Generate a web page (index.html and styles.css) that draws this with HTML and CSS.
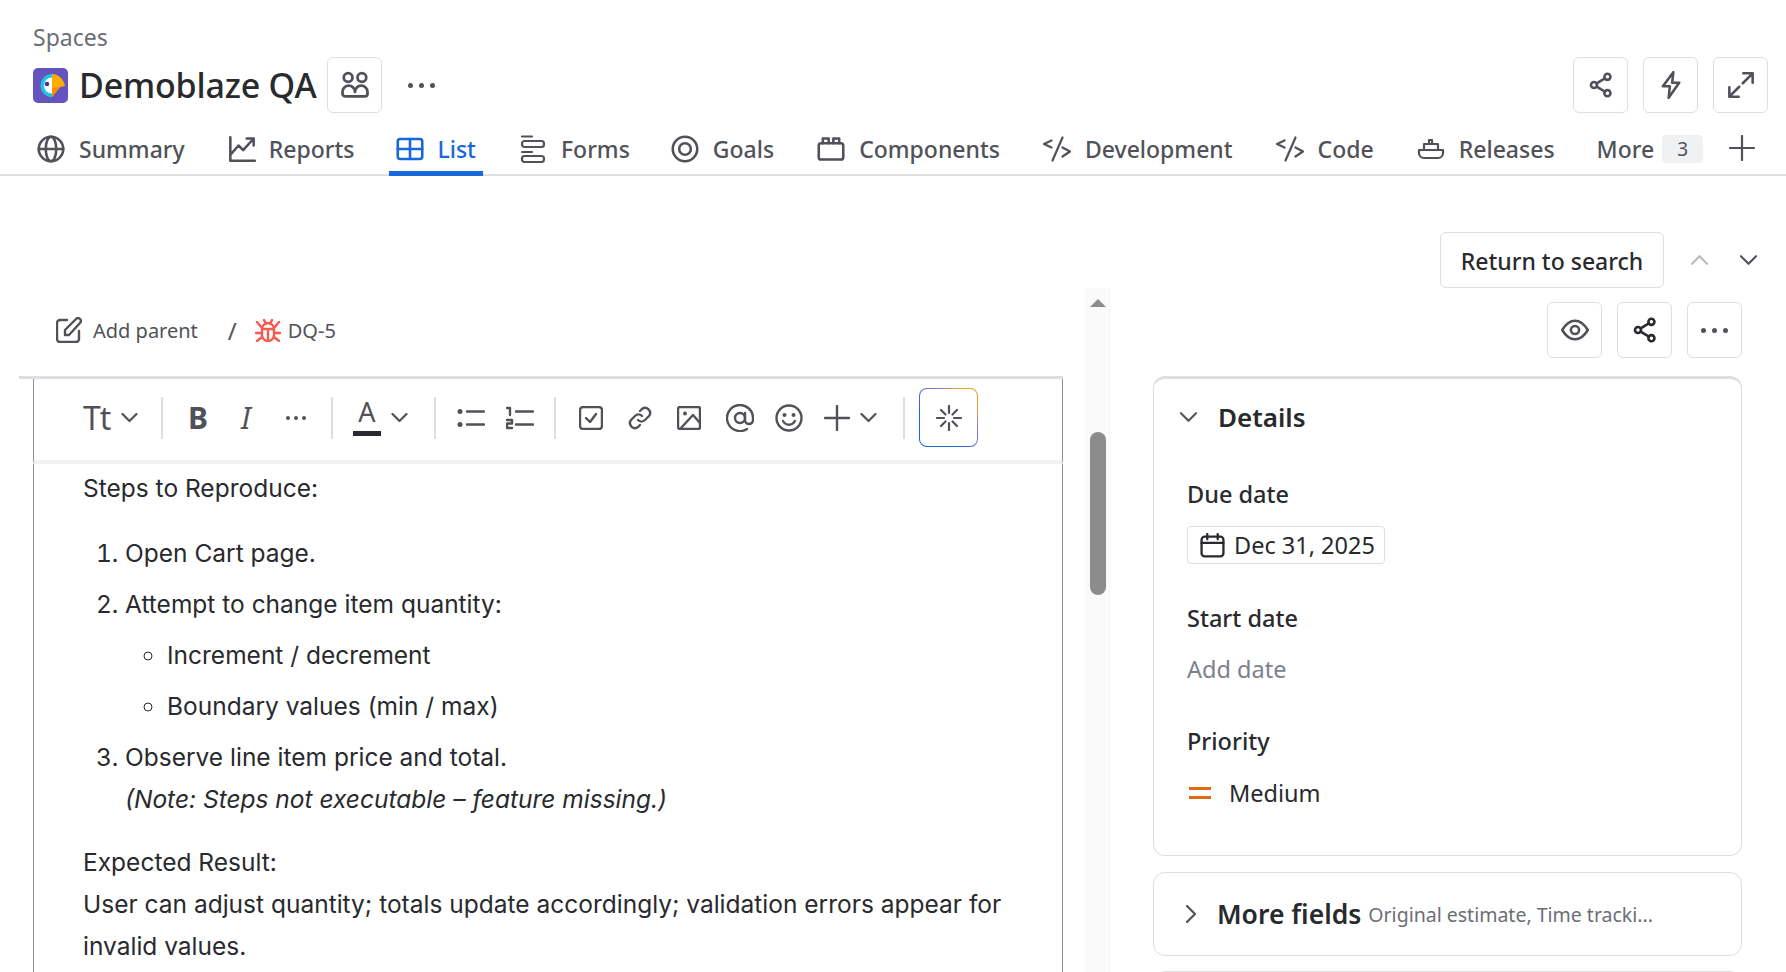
FILE: index.html
```html
<!DOCTYPE html>
<html lang="en">
<head>
    <meta charset="UTF-8">
    <title>Demoblaze QA</title>
    <link rel="stylesheet" href="styles.css">
</head>
<body>
    <div class="page">
        <header class="space-header">
            <div class="crumb">Spaces</div>
            <div class="title-row">
                <svg class="logo" viewBox="0 0 35 35">
                    <rect width="35" height="35" rx="5" fill="#6554c0"/>
                    <path d="M19 6a11.500 11.500 0 0 0 0 23z" fill="#1fc4e0"/>
                    <path d="M19 9.500a8 8 0 0 0 0 16z" fill="#fff"/>
                    <path d="M19 6c7 0 12 6 13 12l-5 1-8 10z" fill="#ffab00"/>
                    <path d="M19 29v-9l8-1z" fill="#ff8b00"/>
                    <circle cx="14" cy="16" r="2.200" fill="#403294"/>
                </svg>
                <h1 class="title">Demoblaze QA</h1>
                <button class="btn-icon team">
                    <svg viewBox="0 0 24 24"><circle cx="6.500" cy="6" r="3.500"/><circle cx="17.500" cy="6" r="3.500"/><path d="M2 19v-1.500a5 5 0 0 1 10 0 5 5 0 0 1 10 0V19a2 2 0 0 1-2 2H4a2 2 0 0 1-2-2z"/></svg>
                </button>
                <span class="dots"><i></i><i></i><i></i></span>
                <div class="header-actions">
                    <button class="btn-icon">
                        <svg viewBox="0 0 24 24"><circle cx="17.500" cy="5" r="2.600"/><circle cx="6" cy="12" r="2.600"/><circle cx="17.500" cy="19" r="2.600"/><path d="M8.300 10.600l7-4.200M8.300 13.400l7 4.200"/></svg>
                    </button>
                    <button class="btn-icon">
                        <svg viewBox="0 0 24 24"><path d="M14 1L5 13h6l-1 10 9-13h-6z"/></svg>
                    </button>
                    <button class="btn-icon">
                        <svg viewBox="0 0 24 24"><path d="M14 2h8v8M22 2l-8.500 8.500M10 22H2v-8M2 22l8.500-8.500"/></svg>
                    </button>
                </div>
            </div>
            <nav class="tabs">
                <a class="tab">
                    <svg viewBox="0 0 24 24"><circle cx="12" cy="12" r="10.500"/><ellipse cx="12" cy="12" rx="4.500" ry="10.500"/><path d="M1.500 12h21"/></svg>Summary</a>
                <a class="tab tab-reports">
                    <svg viewBox="0 0 24 24"><path d="M2 2v20h21M2 17L9 9l4 4 9-10M16 3h6v6"/></svg>Reports</a>
                <a class="tab active">
                    <svg viewBox="0 0 24 24"><rect x="1.500" y="3.500" width="21" height="17" rx="2"/><path d="M1.500 12h21M12 3.500v17"/></svg>List</a>
                <a class="tab tab-forms">
                    <svg viewBox="0 0 28 28"><path d="M3 1.500h10M3 17h10"/><rect x="3" y="6" width="22" height="6" rx="2.500"/><rect x="3" y="21" width="22" height="6" rx="2.500"/></svg>Forms</a>
                <a class="tab">
                    <svg viewBox="0 0 24 24"><circle cx="12" cy="12" r="10.500"/><circle cx="12" cy="12" r="5"/></svg>Goals</a>
                <a class="tab">
                    <svg viewBox="0 0 24 24"><rect x="1.500" y="7" width="21" height="14" rx="2"/><path d="M5 7V3h5v4M14 7V3h5v4"/></svg>Components</a>
                <a class="tab">
                    <svg viewBox="0 -2.500 27 28"><path d="M8 3L0.500 6.500 8 10M19 10l7.500 4L19 19M19 0L9 23"/></svg>Development</a>
                <a class="tab">
                    <svg viewBox="0 -2.500 27 28"><path d="M8 3L0.500 6.500 8 10M19 10l7.500 4L19 19M19 0L9 23"/></svg>Code</a>
                <a class="tab tab-releases">
                    <svg viewBox="0 0 28 28"><path d="M2 15h24v3a5 5 0 0 1-5 5H7a5 5 0 0 1-5-5zM7 15V9h14v6M12 9V5h3v4"/></svg>Releases</a>
                <a class="tab more">More<span class="count">3</span></a>
                <svg class="tab-plus" viewBox="0 0 26 26"><path d="M13 1v24M1 13h24"/></svg>
            </nav>
        </header>

        <div class="search-row">
            <button class="btn-return">Return to search</button>
            <svg class="chev chev-off" viewBox="0 0 18 10"><path d="M1 9l8-8 8 8"/></svg>
            <svg class="chev" viewBox="0 0 18 10"><path d="M1 1l8 8 8-8"/></svg>
        </div>

        <main class="issue">
            <section class="left-col">
                <div class="breadcrumbs">
                    <svg class="ic-parent" viewBox="0 0 26 26"><path d="M11 3H4a3 3 0 0 0-3 3v16a3 3 0 0 0 3 3h16a3 3 0 0 0 3-3v-8"/><path d="M9 18v-5L20 2a2.500 2.500 0 0 1 4 4L13 18z"/></svg>
                    <span>Add parent</span>
                    <span class="sep">/</span>
                    <svg class="ic-bug" viewBox="0 0 26 24"><path d="M7 11a6 6 0 0 1 12 0v6a6 6 0 0 1-12 0zM7 11h12M13 11v12M9 2l2 4M17 2l-2 4M2 4l5 6M24 4l-5 6M1 15h6M25 15h-6M2 23l5-4M24 23l-5-4"/></svg>
                    <span class="key">DQ-5</span>
                </div>
                <div class="editor">
                    <div class="toolbar">
                        <span class="tool-tt">Tt</span>
                        <svg class="mini" viewBox="0 0 16 10"><path d="M1 1l7 7 7-7"/></svg>
                        <i class="tool-sep sep-text"></i>
                        <span class="tool-b">B</span>
                        <span class="tool-i">I</span>
                        <span class="dots small"><i></i><i></i><i></i></span>
                        <i class="tool-sep sep-fmt"></i>
                        <span class="tool-a">A</span>
                        <svg class="mini" viewBox="0 0 16 10"><path d="M1 1l7 7 7-7"/></svg>
                        <i class="tool-sep sep-color"></i>
                        <svg class="tool" viewBox="0 0 28 24"><circle cx="3" cy="5.500" r="2.500" class="fill"/><circle cx="3" cy="18.500" r="2.500" class="fill"/><path d="M10 5.500h17M10 18.500h17"/></svg>
                        <svg class="tool tool-num" viewBox="0 0 28 24"><path d="M1 2h3v7M1 14h5v3.500H1V22h5M10 5.500h17M10 18.500h17"/></svg>
                        <i class="tool-sep sep-list"></i>
                        <svg class="tool tool-sq" viewBox="0 0 24 24"><rect x="1" y="1" width="22" height="22" rx="3"/><path d="M7 12l4 4 6-8"/></svg>
                        <svg class="tool tool-sq" viewBox="0 0 24 24"><path d="M10 14a5 5 0 0 0 7 0l4-4a5 5 0 0 0-7-7l-2 2M14 10a5 5 0 0 0-7 0l-4 4a5 5 0 0 0 7 7l2-2"/></svg>
                        <svg class="tool tool-sq" viewBox="0 0 24 24"><rect x="1" y="1" width="22" height="22" rx="2"/><circle cx="8" cy="7.500" r="2" class="fill"/><path d="M4 22l12-13 7 8"/></svg>
                        <svg class="tool tool-at" viewBox="0 0 28 28"><circle cx="14" cy="14" r="5"/><path d="M19 9v7a4 4 0 0 0 8 0v-2a13 13 0 1 0-6 11"/></svg>
                        <svg class="tool tool-at" viewBox="0 0 28 28"><circle cx="14" cy="14" r="12.500"/><circle cx="9.500" cy="11" r="2" class="fill"/><circle cx="18.500" cy="11" r="2" class="fill"/><path d="M8 17c3 5 9 5 12 0"/></svg>
                        <svg class="tool tool-plus" viewBox="0 0 26 26"><path d="M13 1v24M1 13h24"/></svg>
                        <svg class="mini" viewBox="0 0 16 10"><path d="M1 1l7 7 7-7"/></svg>
                        <i class="tool-sep sep-insert"></i>
                        <span class="ai-btn">
                            <svg viewBox="0 0 26 26"><path d="M13 1v7M13 18v7M1 13h7M18 13h7M5 5l4.500 4.500M16.500 16.500L21 21M21 5l-4.500 4.500M9.500 16.500L5 21"/></svg>
                        </span>
                    </div>
                    <div class="doc">
                        <p>Steps to Reproduce:</p>
                        <ol>
                            <li>Open Cart page.</li>
                            <li>Attempt to change item quantity:
                                <ul>
                                    <li>Increment / decrement</li>
                                    <li>Boundary values (min / max)</li>
                                </ul>
                            </li>
                            <li>Observe line item price and total.<br><em>(Note: Steps not executable – feature missing.)</em></li>
                        </ol>
                        <p>Expected Result:<br>User can adjust quantity; totals update accordingly; validation errors appear for invalid values.</p>
                    </div>
                </div>
            </section>

            <div class="scrollbar">
                <i class="arrow-up"></i>
                <i class="thumb"></i>
            </div>

            <aside class="right-col">
                <div class="issue-actions">
                    <button class="btn-icon">
                        <svg viewBox="0 0 24 24"><path d="M1 12c3-5 7-8 11-8s8 3 11 8c-3 5-7 8-11 8s-8-3-11-8z"/><circle cx="12" cy="12" r="3.500"/></svg>
                    </button>
                    <button class="btn-icon dark">
                        <svg viewBox="0 0 24 24"><circle cx="17.500" cy="5" r="2.600"/><circle cx="6" cy="12" r="2.600"/><circle cx="17.500" cy="19" r="2.600"/><path d="M8.300 10.600l7-4.200M8.300 13.400l7 4.200"/></svg>
                    </button>
                    <button class="btn-icon"><span class="dots"><i></i><i></i><i></i></span></button>
                </div>
                <div class="panel details">
                    <div class="panel-head">
                        <svg class="chev" viewBox="0 0 18 10"><path d="M1 1l8 8 8-8"/></svg>
                        <h2>Details</h2>
                    </div>
                    <h3 class="field-label">Due date</h3>
                    <div class="date-chip">
                        <svg viewBox="0 0 24 24"><rect x="1.500" y="3.500" width="21" height="19" rx="3"/><path d="M1.500 9.500h21M7 1v5M17 1v5"/></svg>
                        Dec 31, 2025
                    </div>
                    <h3 class="field-label start">Start date</h3>
                    <div class="field-empty">Add date</div>
                    <h3 class="field-label priority">Priority</h3>
                    <div class="priority-value"><span class="prio-icon"></span>Medium</div>
                </div>
                <div class="panel more-fields">
                    <svg class="chev-right" viewBox="0 0 10 18"><path d="M1 1l8 8-8 8"/></svg>
                    <h2>More fields</h2>
                    <span class="more-sub">Original estimate, Time tracki...</span>
                </div>
                <div class="panel stub"></div>
            </aside>
        </main>
    </div>
</body>
</html>
```

FILE: styles.css
```css
* {
    box-sizing: border-box;
}

html, body {
    margin: 0;
    height: 100%;
    overflow: hidden;
    background: #fff;
}

.page {
    width: 1786px;
    height: 972px;
    overflow: hidden;
    font-family: "Noto Sans", "Open Sans", sans-serif;
    color: #292a2e;
}

svg {
    fill: none;
    stroke: currentColor;
    stroke-width: 2.200;
    stroke-linecap: round;
    stroke-linejoin: round;
}

button {
    font-family: inherit;
    background: #fff;
    cursor: pointer;
}

/* header */
.space-header {
    padding-top: 23px;
}

.crumb {
    margin-left: 33px;
    font-size: 23px;
    line-height: 28px;
    color: #6b6e76;
}

.title-row {
    display: flex;
    align-items: center;
    height: 56px;
    margin-top: 6px;
    padding: 0 18px 0 33px;
}

.logo {
    width: 35px;
    height: 35px;
    stroke: none;
}

.logo * {
    stroke: none;
}

.title {
    margin: 0 11px 0 11px;
    font-size: 34px;
    font-weight: 500;
    letter-spacing: -0.2px;
    color: #292a2e;
}

.btn-icon {
    display: flex;
    align-items: center;
    justify-content: center;
    width: 55px;
    height: 56px;
    padding: 0;
    color: #505258;
    border: 1px solid #dddee1;
    border-radius: 6px;
}

.btn-icon svg {
    width: 28px;
    height: 28px;
}

.team svg {
    width: 30px;
    height: 30px;
}

.btn-icon.dark {
    color: #292a2e;
}

.dots {
    display: inline-flex;
    gap: 6px;
    color: #505258;
}

.dots i {
    width: 5px;
    height: 5px;
    border-radius: 50%;
    background: currentColor;
}

.team + .dots {
    margin-left: 26px;
}

.header-actions {
    display: flex;
    gap: 15px;
    margin-left: auto;
}

/* tabs */
.tabs {
    display: flex;
    align-items: stretch;
    height: 63px;
    padding: 11px 0 0 30px;
    border-bottom: 2px solid #dddee1;
}

.tab {
    display: flex;
    align-items: center;
    gap: 14px;
    height: 49px;
    padding: 0 7px;
    margin-right: 29px;
    font-size: 23px;
    font-weight: 500;
    color: #505258;
    white-space: nowrap;
}

.tab svg {
    width: 28px;
    height: 28px;
}

.tab-reports {
    gap: 13px;
    margin-right: 28px;
}

.tab-forms {
    margin-right: 27px;
}

.tab-releases {
    margin-right: 28px;
}

.tab.active {
    gap: 13px;
    height: 52px;
    padding-top: 3px;
    color: #1868db;
    border-bottom: 5px solid #1868db;
}

.tab.more {
    gap: 8px;
    margin-right: 0;
}

.count {
    width: 41px;
    height: 28px;
    border-radius: 4px;
    background: #f0f1f2;
    font-size: 19px;
    font-weight: 400;
    line-height: 28px;
    text-align: center;
}

.tab-plus {
    width: 26px;
    height: 26px;
    margin: 11px 0 0 19px;
    color: #505258;
}

/* search row */
.search-row {
    display: flex;
    align-items: center;
    height: 56px;
    margin-top: 56px;
    padding-left: 1440px;
}

.btn-return {
    width: 224px;
    height: 56px;
    padding: 2px 0 0;
    font-size: 23px;
    font-weight: 500;
    color: #292a2e;
    border: 1px solid #dddee1;
    border-radius: 6px;
}

.chev {
    width: 17px;
    height: 10px;
    color: #505258;
}

.chev-off {
    margin: 0 32px 0 27px;
    color: #b7b9be;
}

/* main columns */
.issue {
    display: flex;
    align-items: flex-start;
    margin-top: 14px;
    padding-left: 19px;
}

.left-col {
    width: 1044px;
}

.breadcrumbs {
    display: flex;
    align-items: center;
    height: 56px;
    padding-left: 37px;
    font-size: 20px;
    color: #505258;
}

.ic-parent {
    width: 26px;
    height: 26px;
    margin-right: 11px;
    stroke-width: 2.400;
}

.sep {
    margin: 0 18px 0 30px;
    font-size: 24px;
}

.ic-bug {
    width: 26px;
    height: 24px;
    margin-right: 7px;
    color: #f15b50;
    stroke-width: 2.400;
}

/* editor */
.editor {
    height: 600px;
    margin-top: 18px;
    border-top: 3px solid #dddee1;
}

.toolbar {
    display: flex;
    align-items: center;
    height: 85px;
    margin-left: 14px;
    padding: 0 0 4px 49px;
    color: #505258;
    border-left: 1px solid #8c8f97;
    border-right: 1px solid #8c8f97;
    border-bottom: 4px solid #f0f1f2;
}

.tool-tt {
    width: 38px;
    font-size: 32px;
    font-weight: 400;
    letter-spacing: -1px;
}

.mini {
    width: 17px;
    height: 10px;
    flex: none;
}

.tool-sep {
    flex: none;
    width: 2px;
    height: 42px;
    background: #dddee1;
}

.sep-text { margin: 0 25px 0 23px; }
.sep-fmt { margin: 0 21px 0 25px; }
.sep-color { margin: 0 21px 0 26px; }
.sep-list { margin: 0 23px 0 20px; }
.sep-insert { margin: 0 15px 0 26px; }

.tool-b {
    width: 20px;
    font-size: 30px;
    font-weight: 700;
    line-height: 1;
}

.tool-i {
    width: 16px;
    margin: 0 29px 0 33px;
    font-size: 30px;
    font-style: italic;
    font-weight: 400;
    line-height: 1;
}

.dots.small {
    gap: 4px;
}

.dots.small i {
    width: 4px;
    height: 4px;
}

.tool-a {
    width: 28px;
    height: 36px;
    margin: 0 10px 0 -1px;
    font-size: 27px;
    line-height: 24px;
    text-align: center;
    color: #505258;
    border-bottom: 5px solid #292a2e;
}

.tool {
    width: 28px;
    height: 24px;
    flex: none;
    stroke-width: 2.400;
}

.tool-num {
    margin-left: 21px;
}

.tool-sq {
    width: 24px;
    height: 24px;
    margin-right: 25px;
}

.tool-at {
    width: 28px;
    height: 28px;
    margin-right: 21px;
}

.tool .fill {
    fill: currentColor;
    stroke: none;
}

.tool-plus {
    width: 26px;
    height: 26px;
    margin-right: 10px;
}

.ai-btn {
    display: flex;
    align-items: center;
    justify-content: center;
    width: 59px;
    height: 59px;
    margin-left: -1px;
    border: 1.500px solid transparent;
    border-radius: 8px;
    background: linear-gradient(#fff, #fff) padding-box,
        linear-gradient(45deg, #1868db 30%, #8270db 62%, #e2a52b 85%) border-box;
}

.ai-btn svg {
    width: 26px;
    height: 26px;
}

.doc {
    height: 520px;
    margin-left: 14px;
    padding: 3px 50px 0 49px;
    font-family: Inter, "Noto Sans", sans-serif;
    font-size: 24.500px;
    line-height: 42px;
    color: #292a2e;
    border-left: 1px solid #8c8f97;
    border-right: 1px solid #8c8f97;
}

.doc p {
    margin: 0;
}

.doc ol {
    margin: 23px 0 21px;
    padding-left: 42px;
}

.doc ul {
    margin: 0;
    padding-left: 42px;
    list-style: circle;
}

.doc li {
    margin-top: 9px;
}

/* scrollbar */
.scrollbar {
    position: relative;
    flex: none;
    width: 26px;
    height: 698px;
    margin: -14px 0 0 22px;
    background: #fafafa;
}

.arrow-up {
    position: absolute;
    top: 11px;
    left: 5px;
    border: 8px solid transparent;
    border-top: 0;
    border-bottom-color: #8c8c8c;
}

.thumb {
    position: absolute;
    top: 144px;
    left: 5px;
    width: 16px;
    height: 163px;
    border-radius: 8px;
    background: #8c8c8c;
}

/* right column */
.right-col {
    flex: none;
    width: 589px;
    margin-left: 42px;
}

.issue-actions {
    display: flex;
    justify-content: flex-end;
    gap: 15px;
}

.panel {
    border: 1px solid #dddee1;
    border-radius: 12px;
}

.details {
    height: 480px;
    margin-top: 18px;
    padding: 0 0 0 33px;
    border-top: 3px solid #dddee1;
}

.panel-head {
    display: flex;
    align-items: center;
    gap: 21px;
    height: 76px;
    margin-left: -7px;
}

h2 {
    margin: 0;
    font-size: 26px;
    font-weight: 600;
    color: #292a2e;
}

.field-label {
    margin: 0;
    font-size: 23.500px;
    font-weight: 500;
    line-height: 32px;
    color: #292a2e;
}

.details .field-label:nth-of-type(1) {
    margin-top: 23px;
}

.date-chip {
    display: inline-flex;
    align-items: center;
    gap: 9px;
    height: 38px;
    margin-top: 16px;
    padding: 0 9px 0 12px;
    font-size: 23.500px;
    color: #292a2e;
    border: 1px solid #dddee1;
    border-radius: 4px;
}

.date-chip svg {
    width: 25px;
    height: 25px;
}

.field-label.start {
    margin-top: 38px;
}

.field-empty {
    margin-top: 19px;
    font-size: 23.500px;
    line-height: 32px;
    color: #7d818a;
}

.field-label.priority {
    margin-top: 40px;
}

.priority-value {
    display: flex;
    align-items: center;
    gap: 18px;
    margin-top: 20px;
    font-size: 23.500px;
    line-height: 32px;
    color: #292a2e;
}

.prio-icon {
    width: 22px;
    height: 12px;
    margin-left: 2px;
    border-top: 3px solid #e56910;
    border-bottom: 3px solid #e56910;
}

.more-fields {
    display: flex;
    align-items: center;
    height: 84px;
    margin-top: 16px;
    padding-left: 32px;
}

.more-fields h2 {
    font-size: 26.500px;
}

.chev-right {
    width: 10px;
    height: 18px;
    margin-right: 21px;
    color: #505258;
}

.more-sub {
    margin-left: 7px;
    font-size: 19.500px;
    color: #6b6e76;
}

.stub {
    height: 60px;
    margin-top: 15px;
}
```
